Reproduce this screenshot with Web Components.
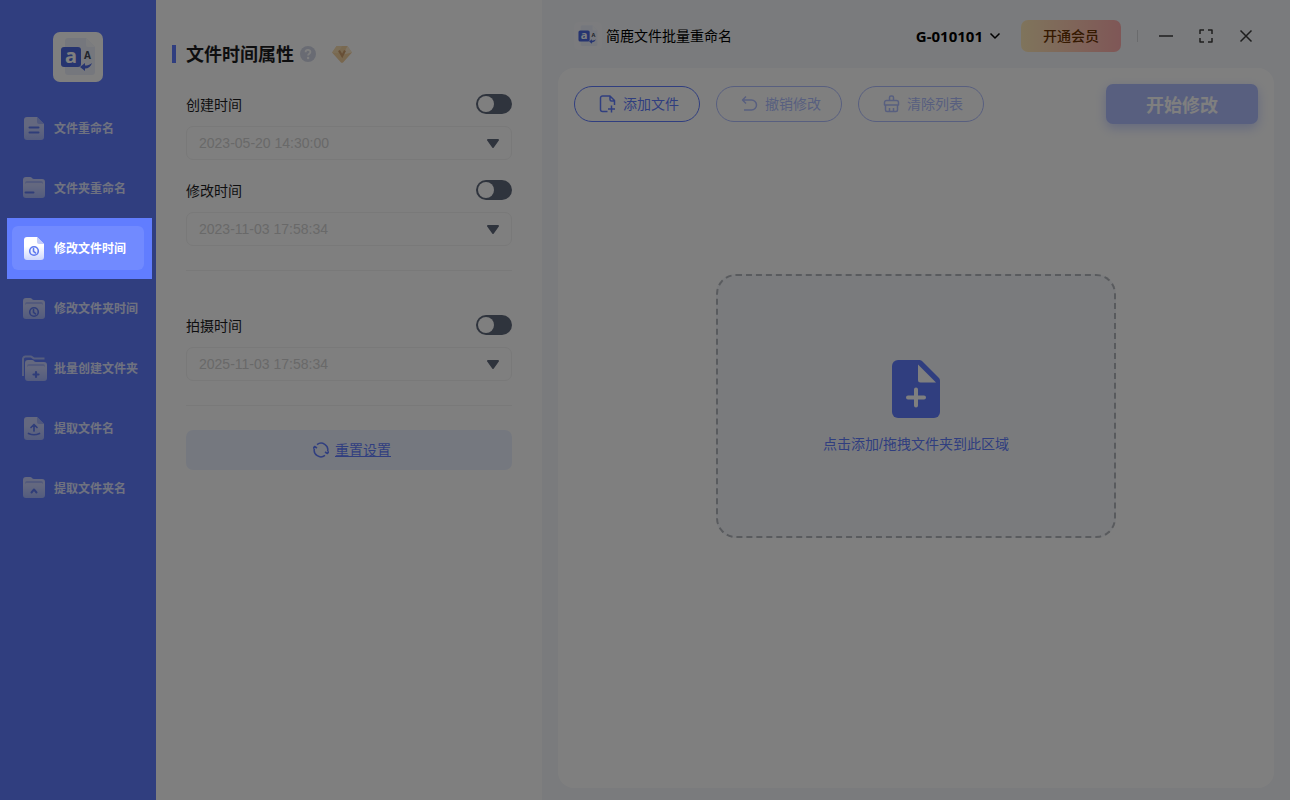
<!DOCTYPE html>
<html lang="zh-CN">
<head>
<meta charset="utf-8">
<meta name="viewport" content="width=device-width, initial-scale=1">
<title>简鹿文件批量重命名</title>
<style>
  html, body { height: 100%; margin: 0; }
  body {
    font: 14px/20px "Liberation Sans", "Noto Sans CJK SC", sans-serif;
    color: #1d1d1f;
    background: #fff;
  }
</style>
</head>
<body>
<rename-app></rename-app>

<script>
const file = `<path d="M5 2h10l7 7v13a3 3 0 0 1-3 3H5a3 3 0 0 1-3-3V5a3 3 0 0 1 3-3z" fill="url(#g)"/><path d="M15 2l7 7h-5a2 2 0 0 1-2-2z" fill="#c3cdfa"/>`;
const folder = `<path d="M1 5a3 3 0 0 1 3-3h4c2 0 2 2 4 2h8a3 3 0 0 1 3 3v13a3 3 0 0 1-3 3H4a3 3 0 0 1-3-3z" fill="url(#g)"/><path d="M3 9V8a2 2 0 0 1 2-2h14a2 2 0 0 1 2 2v1l-1-1H4z" fill="#cbd4fa"/>`;
const clock = `<circle cx="12" cy="16" r="4.3"/><path d="M11.5 13.5v2.8l2 1.6"/>`;

// every icon: [viewBox, markup]
const ICONS = {
  file: ["0 0 26 26", `${file}<path d="M7.500 12.500h9M7.500 17.500h9" class="b" stroke-width="2"/>`],
  folder: ["0 0 26 26", `${folder}<path d="M3.500 17.500h8" class="b" stroke-width="2"/>`],
  fileTime: ["0 0 26 26", `${file}<g class="b">${clock}</g>`],
  folderTime: ["0 0 26 26", `<g transform="translate(0 1)">${folder}<g class="b">${clock}</g></g>`],
  folderAdd: ["0 0 26 26", `<path d="M1 21V4a2.500 2.500 0 0 1 2.500-2.500h5c2 0 2 2 4 2h10" fill="none" stroke="#d7defc" stroke-width="2"/><g transform="translate(2 3)">${folder}</g><path d="M11.500 19.500h5M14 17v5" class="b" stroke-width="2.200"/>`],
  fileUp: ["0 0 26 26", `${file}<path d="M12 16V9.500M9 12.500l3-3 3 3M6.500 18.500q5.500 2.500 11 0" class="b" stroke-width="1.700"/>`],
  folderUp: ["0 0 26 26", `${folder}<path d="M9.500 17.500l2.500-3 2.500 3" class="b" stroke-width="2"/>`],
  help: ["0 0 16 16", `<circle cx="8" cy="8" r="8" fill="#d3d7e6"/><path d="M5.600 6.200c0-3 4.800-3 4.800-.2 0 1.700-2.300 1.600-2.300 3.400" fill="none" stroke="#fff" stroke-width="1.800"/><circle cx="8.100" cy="12" r="1.200" fill="#fff"/>`],
  diamond: ["0 0 20 18", `<path d="M4.500 1h11L20 7.500 11.500 17a2 2 0 0 1-3 0L0 7.500z" fill="url(#d)"/><path d="M4.500 1H10L6 8H0z" fill="#f8e2bb" opacity=".6"/><path d="M15.500 1L20 7.500l-9 2z" fill="#fff3df" opacity=".7"/><path d="M7 5.500l3.200 5.500L13 5.500" fill="none" stroke="#cf9f6c" stroke-width="2.200"/>`],
  addFile: ["0 0 18 18", `<path d="M8.500 16.500H3.500A2 2 0 0 1 1.500 14.500V3a2 2 0 0 1 2-2H11l4.500 4.500V10M11 1v3.500A1.500 1.500 0 0 0 12.500 6H15.500M12.500 10.500v7M9 14h7" class="l"/>`],
  undo: ["0 0 18 18", `<path d="M5 1.500L1.500 5 5 8.500M1.500 5h9a5 5 0 0 1 0 10H3" class="l"/>`],
  clear: ["0 0 18 18", `<path d="M6.500 5.500V2.500A1.500 1.500 0 0 1 8 1h1a1.500 1.500 0 0 1 1.500 1.500v3M3.500 5.500h10a2 2 0 0 1 2 2V10h-14V7.500a2 2 0 0 1 2-2zM2.500 10v5A1.500 1.500 0 0 0 4 16.500h9a1.500 1.500 0 0 0 1.500-1.500V10M6.500 13v3.500M10.500 13v3.500" class="l"/>`],
  reset: ["0 0 16 16", `<path d="M4 2.600A6.700 6.700 0 0 1 14.600 9.500M12 13.400A6.700 6.700 0 0 1 1.400 6.500" class="l"/><path d="M0 6.500l1.600-2L4 6M12 10l2.400 1.500L16 9.500" class="l"/>`],
  addBig: ["0 0 48 58", `<path d="M6 0h21c1.500 0 2.500.5 3.500 1.500l16 16c1 1 1.500 2 1.500 3.500v31a6 6 0 0 1-6 6H6a6 6 0 0 1-6-6V6a6 6 0 0 1 6-6z" fill="currentColor"/><path d="M26 4.500V20a2.500 2.500 0 0 0 2.500 2.500H44z" fill="#fff"/><path d="M16 37.500h16M24 29.500v16" fill="none" stroke="#fff" stroke-width="4" stroke-linecap="round"/>`],
  chevron: ["0 0 12 12", `<path d="M1.500 3.500L6 8l4.500-4.500" class="l"/>`],
  triangle: ["0 0 14 10", `<path d="M2 2h10L7 9z" fill="currentColor" stroke="currentColor" stroke-width="2" stroke-linejoin="round"/>`],
  minimize: ["0 0 16 16", `<path d="M1 8h14" class="l"/>`],
  maximize: ["0 0 16 16", `<path d="M2 6V2h4M10 2h4v4M14 10v4h-4M6 14H2v-4" class="l"/>`],
  close: ["0 0 16 16", `<path d="M2.500 2.500l11 11M13.500 2.500l-11 11" class="l"/>`],
  logo: ["0 0 50 50", `<path d="M15 6h18l9 9v25a3 3 0 0 1-3 3H15a3 3 0 0 1-3-3V9a3 3 0 0 1 3-3z" fill="#ebeffb"/><path d="M33 6l9 9h-7a2 2 0 0 1-2-2z" fill="#f6f8fd"/><rect x="8" y="15" width="20" height="20" rx="3" fill="#4d69e0"/><text x="18" y="31" text-anchor="middle" font-size="20" fill="#fff">a</text><text x="34.500" y="27" text-anchor="middle" font-size="10" fill="#434957">A</text><path d="M27 35l5-4v2.500c2.500 0 4.500-.5 7-2.500-1 3.500-3.500 5.500-7 5.500V39z" fill="#4d69e0"/>`]
};

class AppIcon extends HTMLElement {
  constructor() {
    super();
    this.attachShadow({ mode: "open" });
  }

  connectedCallback() {
    const [box, markup] = ICONS[this.getAttribute("name")];
    const [, , w, h] = box.split(" ");
    this.shadowRoot.innerHTML = `
      <style>
        :host { display: block; flex: none; width: var(--icon-width, ${w}px); height: var(--icon-height, ${h}px); }
        svg { display: block; width: 100%; height: 100%; }
        text { font-family: "Noto Sans", sans-serif; font-weight: 700; }
        .b { fill: none; stroke: #5f79ee; stroke-linecap: round; stroke-linejoin: round; }
        g.b { stroke-width: 1.600; }
        .l { fill: none; stroke: currentColor; stroke-width: 1.500; stroke-linejoin: round; }
      </style>
      <svg viewBox="${box}" aria-hidden="true">
        <defs>
          <linearGradient id="g" x2="0" y2="1"><stop offset=".4" stop-color="#fff"/><stop offset="1" stop-color="#cdd6fd"/></linearGradient>
          <linearGradient id="d" x2="1" y2="1"><stop stop-color="#f3d6a6"/><stop offset="1" stop-color="#f0cb98"/></linearGradient>
        </defs>
        ${markup}
      </svg>`;
  }
}
customElements.define("app-icon", AppIcon);

class NavItem extends HTMLElement {
  constructor() {
    super();
    this.attachShadow({ mode: "open" });
  }

  connectedCallback() {
    const active = this.hasAttribute("active");
    this.shadowRoot.innerHTML = `
      <style>
        :host { display: block; position: relative; }
        a {
          display: flex;
          align-items: center;
          gap: 6px;
          height: 44px;
          padding-left: 10px;
          border-radius: 6px;
          color: #fff;
          font-size: 12px;
          font-weight: 700;
          white-space: nowrap;
          text-decoration: none;
        }
        app-icon { opacity: .65; }
        span { padding-top: 2px; opacity: .8; }
        :host([active]) a { background: rgba(255, 255, 255, .1); }
        :host([active]) a > * { opacity: 1; }
        /* guide spotlight: dims the whole window except this item */
        .spot {
          position: absolute;
          z-index: 10;
          inset: -8px -8px -9px -5px;
          box-shadow: 0 0 0 200vmax rgba(0, 0, 0, .5);
          pointer-events: none;
        }
      </style>
      <a href="#" ${active ? 'aria-current="page"' : ""}>
        <app-icon name="${this.getAttribute("icon")}"></app-icon>
        <span><slot></slot></span>
      </a>
      ${active ? '<div class="spot"></div>' : ""}`;
  }
}
customElements.define("nav-item", NavItem);

class SideBar extends HTMLElement {
  constructor() {
    super();
    this.attachShadow({ mode: "open" });
    this.shadowRoot.innerHTML = `
      <style>
        :host { display: block; box-sizing: border-box; padding: 32px 12px 0; background: #617dff; }
        .logo { margin: 0 auto 24px; border-radius: 7px; background: #fff; }
        nav { display: grid; gap: 16px; }
      </style>
      <app-icon class="logo" name="logo"></app-icon>
      <nav aria-label="功能"><slot></slot></nav>`;
  }
}
customElements.define("side-bar", SideBar);

class TimeField extends HTMLElement {
  constructor() {
    super();
    this.attachShadow({ mode: "open" });
  }

  connectedCallback() {
    const label = this.getAttribute("label");
    this.shadowRoot.innerHTML = `
      <style>
        :host { display: grid; gap: 12px; }
        .row { display: flex; justify-content: space-between; height: 20px; }
        .row label { line-height: 22px; }
        .toggle {
          appearance: none;
          display: flex;
          box-sizing: border-box;
          width: 36px;
          height: 20px;
          margin: 0;
          padding: 2px;
          border-radius: 10px;
          background: #5f687b;
        }
        .toggle::before { content: ""; width: 16px; height: 16px; border-radius: 50%; background: #fff; }
        .toggle:checked { justify-content: flex-end; background: #617dff; }
        .box {
          display: flex;
          align-items: center;
          box-sizing: border-box;
          height: 34px;
          padding: 0 11px 0 12px;
          border: 1px solid #f2f2f2;
          border-radius: 7px;
          color: #5f687b;
        }
        .date {
          flex: 1;
          min-width: 0;
          padding: 0;
          border: 0;
          background: none;
          color: #d2d2d2;
          font: 14px/20px "Liberation Sans", sans-serif;
        }
      </style>
      <div class="row">
        <label for="on">${label}</label>
        <input class="toggle" id="on" type="checkbox" role="switch">
      </div>
      <div class="box">
        <input class="date" type="text" aria-label="${label}" value="${this.getAttribute("value")}" disabled>
        <app-icon name="triangle"></app-icon>
      </div>`;
  }
}
customElements.define("time-field", TimeField);

class SettingsPanel extends HTMLElement {
  constructor() {
    super();
    this.attachShadow({ mode: "open" });
    this.shadowRoot.innerHTML = `
      <style>
        :host { display: block; box-sizing: border-box; padding: 44px 30px 0 16px; background: #fff; }
        header { display: flex; align-items: center; height: 20px; }
        header::before { content: ""; width: 4px; height: 18px; margin-right: 10px; background: #617dff; }
        h1 { margin: 0; padding-top: 2px; font-size: 18px; line-height: 20px; }
        header app-icon { margin-left: 6px; }
        header app-icon + app-icon { margin-left: 16px; }
        .body { padding: 30px 0 0 14px; }
        .group { display: grid; gap: 20px; padding-bottom: 24px; border-bottom: 1px solid #f3f3f3; }
        .group + .group { padding-top: 44px; }
        button {
          display: flex;
          align-items: center;
          justify-content: center;
          gap: 6px;
          width: 100%;
          height: 40px;
          margin-top: 24px;
          padding: 0 0 0 6px;
          border: 0;
          border-radius: 7px;
          background: #ebf1ff;
          color: #617dff;
          font: inherit;
          text-decoration: underline;
          cursor: pointer;
        }
      </style>
      <header>
        <h1>文件时间属性</h1>
        <app-icon name="help"></app-icon>
        <app-icon name="diamond"></app-icon>
      </header>
      <div class="body">
        <div class="group">
          <time-field label="创建时间" value="2023-05-20 14:30:00"></time-field>
          <time-field label="修改时间" value="2023-11-03 17:58:34"></time-field>
        </div>
        <div class="group">
          <time-field label="拍摄时间" value="2025-11-03 17:58:34"></time-field>
        </div>
        <button type="button"><app-icon name="reset"></app-icon>重置设置</button>
      </div>`;
  }
}
customElements.define("settings-panel", SettingsPanel);

class TitleBar extends HTMLElement {
  constructor() {
    super();
    this.attachShadow({ mode: "open" });
    this.shadowRoot.innerHTML = `
      <style>
        :host { display: flex; align-items: center; height: 72px; padding: 0 32px; color: #000; }
        .logo { --icon-width: 28px; --icon-height: 28px; margin-right: 4px; border-radius: 5px; background: #f8f9fc; }
        button { display: flex; align-items: center; padding: 0; border: 0; background: none; color: inherit; font: inherit; cursor: pointer; }
        .user { gap: 6px; margin-left: auto; font: 700 15px/20px "Noto Sans", sans-serif; }
        .vip {
          justify-content: center;
          width: 100px;
          height: 32px;
          margin: 0 16px 0 20px;
          border-radius: 7px;
          background: linear-gradient(90deg, #ffe9b8, #ffaeae);
          color: #6b3200;
          font-weight: 500;
        }
        .window { display: flex; align-items: center; gap: 16px; color: #3c3c3c; }
        .window::before { content: ""; width: 1px; height: 12px; background: #d5d7da; }
        .window button { width: 24px; height: 24px; justify-content: center; }
      </style>
      <app-icon class="logo" name="logo"></app-icon>
      <span>简鹿文件批量重命名</span>
      <button class="user" type="button">G-010101<app-icon name="chevron"></app-icon></button>
      <button class="vip" type="button">开通会员</button>
      <div class="window">
        <button type="button" aria-label="最小化"><app-icon name="minimize"></app-icon></button>
        <button type="button" aria-label="最大化"><app-icon name="maximize"></app-icon></button>
        <button type="button" aria-label="关闭"><app-icon name="close"></app-icon></button>
      </div>`;
  }
}
customElements.define("title-bar", TitleBar);

class ToolButton extends HTMLElement {
  constructor() {
    super();
    this.attachShadow({ mode: "open" });
  }

  connectedCallback() {
    this.shadowRoot.innerHTML = `
      <style>
        :host { display: block; }
        button {
          display: flex;
          align-items: center;
          gap: 6px;
          height: 36px;
          padding: 0 20px 0 24px;
          border: 1px solid #617dff;
          border-radius: 18px;
          background: none;
          color: #617dff;
          font: inherit;
          white-space: nowrap;
        }
        button:disabled { border-color: #b0beff; color: #b0beff; }
      </style>
      <button type="button" ${this.hasAttribute("disabled") ? "disabled" : ""}>
        <app-icon name="${this.getAttribute("icon")}"></app-icon><slot></slot>
      </button>`;
  }
}
customElements.define("tool-button", ToolButton);

class DropZone extends HTMLElement {
  constructor() {
    super();
    this.attachShadow({ mode: "open" });
    this.shadowRoot.innerHTML = `
      <style>
        :host { display: block; }
        button {
          display: flex;
          flex-direction: column;
          align-items: center;
          justify-content: center;
          gap: 16px;
          width: 400px;
          height: 264px;
          padding: 2px 0 0;
          border: 2px dashed #b3b6bd;
          border-radius: 20px;
          background: #f5f7fa;
          color: #617dff;
          font: inherit;
        }
      </style>
      <button type="button">
        <app-icon name="addBig"></app-icon>
        <slot></slot>
      </button>`;
  }
}
customElements.define("drop-zone", DropZone);

class RenameApp extends HTMLElement {
  constructor() {
    super();
    this.attachShadow({ mode: "open" });
    this.shadowRoot.innerHTML = `
      <style>
        :host { display: grid; grid-template-columns: 156px 386px minmax(0, 1fr); min-height: 100vh; }
        main { display: flex; flex-direction: column; background: #f5f7fa; }
        title-bar { margin-bottom: -4px; }
        .card {
          display: flex;
          flex: 1;
          flex-direction: column;
          margin: 0 16px 12px;
          border-radius: 16px;
          background: #fff;
        }
        .tools { display: flex; align-items: center; gap: 16px; padding: 16px 16px 0; }
        .start {
          width: 152px;
          height: 40px;
          margin-left: auto;
          padding: 0;
          border: 0;
          border-radius: 7px;
          background: #b0beff;
          box-shadow: 0 4px 12px rgba(97, 125, 255, .35);
          color: #fff;
          font: 700 18px/24px "Noto Sans CJK SC", sans-serif;
        }
        .files { display: grid; flex: 1; place-items: center; padding-bottom: 100px; }
      </style>
      <side-bar>
        <nav-item icon="file">文件重命名</nav-item>
        <nav-item icon="folder">文件夹重命名</nav-item>
        <nav-item icon="fileTime" active>修改文件时间</nav-item>
        <nav-item icon="folderTime">修改文件夹时间</nav-item>
        <nav-item icon="folderAdd">批量创建文件夹</nav-item>
        <nav-item icon="fileUp">提取文件名</nav-item>
        <nav-item icon="folderUp">提取文件夹名</nav-item>
      </side-bar>
      <settings-panel></settings-panel>
      <main>
        <title-bar></title-bar>
        <div class="card">
          <div class="tools">
            <tool-button icon="addFile">添加文件</tool-button>
            <tool-button icon="undo" disabled>撤销修改</tool-button>
            <tool-button icon="clear" disabled>清除列表</tool-button>
            <button class="start" type="button">开始修改</button>
          </div>
          <div class="files"><drop-zone>点击添加/拖拽文件夹到此区域</drop-zone></div>
        </div>
      </main>`;
  }
}
customElements.define("rename-app", RenameApp);
</script>
</body>
</html>
